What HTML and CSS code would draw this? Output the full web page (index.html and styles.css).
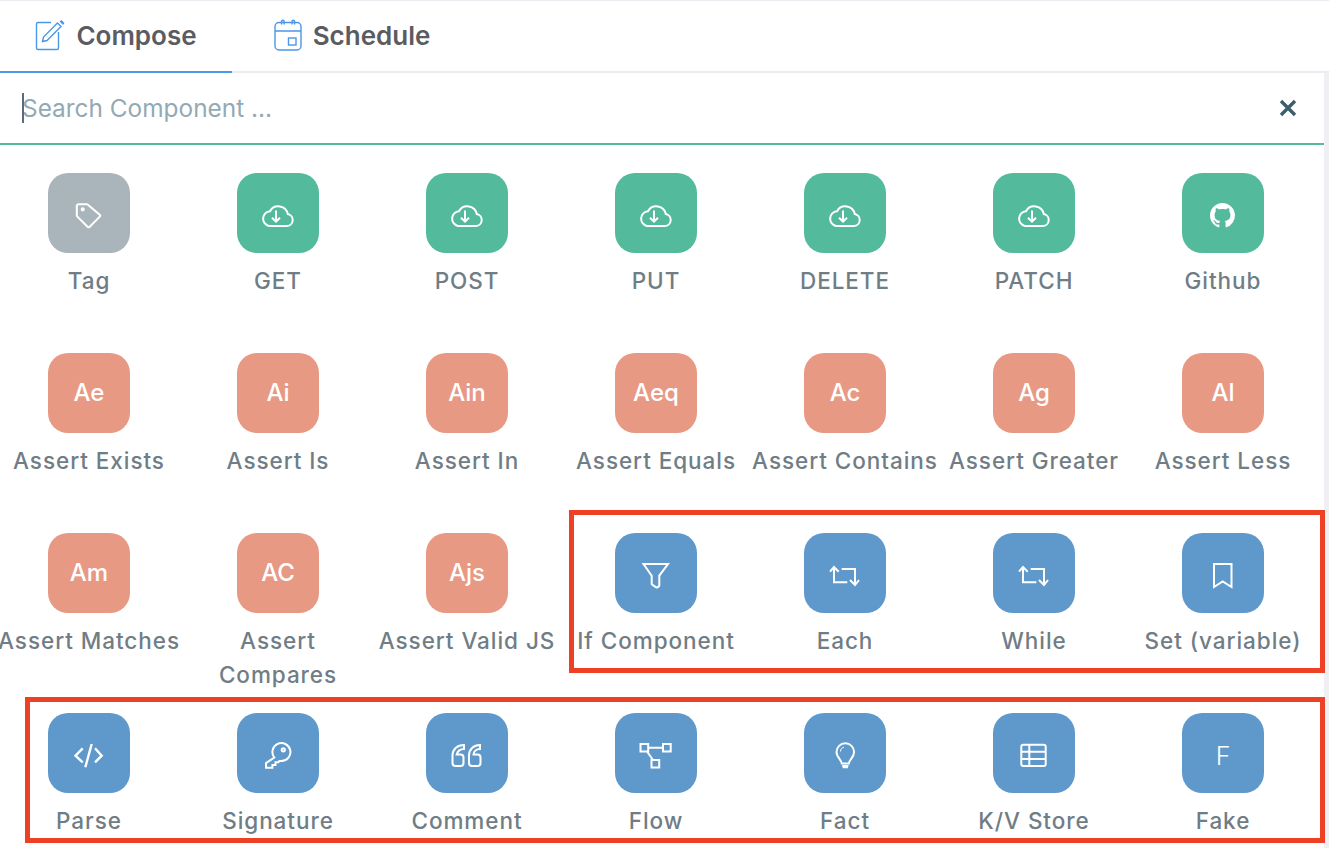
FILE: index.html
```html
<!DOCTYPE html>
<html lang="en">
<head>
  <meta charset="UTF-8">
  <meta name="viewport" content="width=device-width, initial-scale=1.0">
  <title>Compose</title>
  <link rel="stylesheet" href="styles.css">
</head>
<body>
  <svg class="sprite" xmlns="http://www.w3.org/2000/svg">
    <symbol id="i-tag" viewBox="0 0 40 40"><path d="M9.5 11.3h8.300a2 2 0 0 1 1.400.6L31 22a1 1 0 0 1 0 1.400L20.500 34a1.200 1.200 0 0 1-1.700 0L8.400 23.600a2 2 0 0 1-.6-1.400v-9.200a1.700 1.700 0 0 1 1.700-1.700z"/><circle cx="13.700" cy="16.300" r="1.100"/></symbol>
    <symbol id="i-cloud" viewBox="0 0 40 40"><path d="M11 33h17.800a6 6 0 0 0 1-11.900A9.600 9.600 0 0 0 12 18.200 7.500 7.500 0 0 0 11 33z"/><path d="M18 17.500v11M14 24.700l4 4 4-4"/></symbol>
    <symbol id="i-github" viewBox="0 0 40 40"><path class="solid" transform="translate(7 10) scale(1.56)" d="M8 0C3.58 0 0 3.58 0 8c0 3.54 2.29 6.53 5.47 7.59.4.07.55-.17.55-.38 0-.19-.01-.82-.01-1.49-2.01.37-2.53-.49-2.69-.94-.09-.23-.48-.94-.82-1.13-.28-.15-.68-.52-.01-.53.63-.01 1.08.58 1.23.82.72 1.21 1.87.87 2.33.66.07-.52.28-.87.51-1.07-1.78-.2-3.64-.89-3.64-3.95 0-.87.31-1.59.82-2.15-.08-.2-.36-1.02.08-2.12 0 0 .67-.21 2.2.82.64-.18 1.32-.27 2-.27.68 0 1.36.09 2 .27 1.53-1.04 2.2-.82 2.2-.82.44 1.1.16 1.92.08 2.12.51.56.82 1.27.82 2.15 0 3.07-1.87 3.75-3.65 3.95.29.25.54.73.54 1.48 0 1.07-.01 1.93-.01 2.2 0 .21.15.46.55.38A8.013 8.013 0 0016 8c0-4.42-3.58-8-8-8z"/></symbol>
    <symbol id="i-funnel" viewBox="0 0 40 40"><path d="M7.500 11h24.500L23.300 22.700v9.800a1 1 0 0 1-.5.8l-1.500 1a1 1 0 0 1-1.100 0l-4-2.600a1 1 0 0 1-.5-.8v-8.200z"/></symbol>
    <symbol id="i-repeat" viewBox="0 0 40 40"><path d="M5 18.700l4-4.700 4.700 4.700M9 14.500v14.800h13.300M16.700 16H30v15.500M25 27l5 5 4-5"/></symbol>
    <symbol id="i-bookmark" viewBox="0 0 40 40"><path d="M11 11h17.500v23l-8.800-5.500L11 34z"/></symbol>
    <symbol id="i-code" viewBox="0 0 40 40"><path class="bold" d="M13.700 15.300L6.500 22.700l7.200 6.600M26 15.300l6.700 7.400-6.700 6.600M22.700 11l-6.400 23.300"/></symbol>
    <symbol id="i-key" viewBox="0 0 40 40"><path d="M16.300 24.600A9 9 0 1 1 23.500 28.100L21.300 28l-.8 1.200h-3v2.900h-3.100v2.600H8v-4.600z"/><circle cx="25.300" cy="16.800" r="1.600"/></symbol>
    <symbol id="i-quote" viewBox="0 0 40 40"><path d="M17 12C10 12 5.500 16.500 5.500 22.500V30a3 3 0 0 0 3 3h5a3 3 0 0 0 3-3v-5.500a3 3 0 0 0-3-3h-3.800C10.500 18.500 13 16 17 16z"/><path d="M33 12C26.500 12 22 16.500 22 22.500V30a3 3 0 0 0 3 3h5.500a3 3 0 0 0 3-3v-5.500a3 3 0 0 0-3-3h-4c.2-3 2.500-5.500 6.500-5.500z"/></symbol>
    <symbol id="i-flow" viewBox="0 0 40 40"><path d="M4.500 11h7.700v7.500H4.500zM27 11h7.700v7.500H27zM15.500 27h7.700v7.500h-7.700zM12.200 14.700H27M11 18.500l6 8.500"/></symbol>
    <symbol id="i-bulb" viewBox="0 0 40 40"><path d="M16.800 30.500c0-3.500-5.300-6-5.300-11.400a8.800 8.800 0 0 1 17.600 0c0 5.400-5.300 7.900-5.300 11.400z"/><path class="thin" d="M15.500 18.500c0-2.500 1.500-4 3.500-4.300"/><path class="solid" d="M17 32h6.600l-.8 3.300h-5z"/></symbol>
    <symbol id="i-table" viewBox="0 0 40 40"><rect x="7.300" y="11.800" width="24.400" height="21.300" rx="2"/><path d="M7.300 18.800h24.400M7.300 26h24.400M15.300 11.800v21.300"/></symbol>
  </svg>

  <div class="app">
    <div class="tabs">
      <div class="tab active">
        <svg class="tab-icon" width="30" height="32" viewBox="0 0 30 32"><path d="M16 3.500H3a1.500 1.500 0 0 0-1.500 1.500v24A1.500 1.500 0 0 0 3 30.500h19a1.500 1.500 0 0 0 1.500-1.500V13"/><path d="M7.500 22.500l1-4.500L22.500 4l3.500 3.500L12 21.500z"/><path class="solid" d="M24.500 2.500l2-1.500 3 3-1.500 2z"/></svg>
        <span>Compose</span>
      </div>
      <div class="tab">
        <svg class="tab-icon" width="28" height="32" viewBox="0 0 28 32"><rect x="1" y="3.500" width="26" height="27.500" rx="4"/><path d="M1 12h26M7.500 5.500V2.500a1.300 1.300 0 0 1 2.600 0v3M18 5.500V2.500a1.300 1.300 0 0 1 2.600 0v3"/><rect x="14.500" y="19" width="7.500" height="7"/></svg>
        <span>Schedule</span>
      </div>
    </div>

    <div class="panel">
      <div class="search">
        <span class="caret"></span>
        <input class="search-input" type="text" placeholder="Search Component ...">
        <svg class="search-clear" width="20" height="20" viewBox="0 0 20 20"><path d="M3 3l14 14M17 3L3 17"/></svg>
      </div>

      <div class="grid">
        <div class="item"><div class="tile grey"><svg><use href="#i-tag"/></svg></div><div class="label">Tag</div></div>
        <div class="item"><div class="tile green"><svg><use href="#i-cloud"/></svg></div><div class="label">GET</div></div>
        <div class="item"><div class="tile green"><svg><use href="#i-cloud"/></svg></div><div class="label">POST</div></div>
        <div class="item"><div class="tile green"><svg><use href="#i-cloud"/></svg></div><div class="label">PUT</div></div>
        <div class="item"><div class="tile green"><svg><use href="#i-cloud"/></svg></div><div class="label">DELETE</div></div>
        <div class="item"><div class="tile green"><svg><use href="#i-cloud"/></svg></div><div class="label">PATCH</div></div>
        <div class="item"><div class="tile green"><svg><use href="#i-github"/></svg></div><div class="label">Github</div></div>

        <div class="item"><div class="tile salmon">Ae</div><div class="label">Assert Exists</div></div>
        <div class="item"><div class="tile salmon">Ai</div><div class="label">Assert Is</div></div>
        <div class="item"><div class="tile salmon">Ain</div><div class="label">Assert In</div></div>
        <div class="item"><div class="tile salmon">Aeq</div><div class="label">Assert Equals</div></div>
        <div class="item"><div class="tile salmon">Ac</div><div class="label">Assert Contains</div></div>
        <div class="item"><div class="tile salmon">Ag</div><div class="label">Assert Greater</div></div>
        <div class="item"><div class="tile salmon">Al</div><div class="label">Assert Less</div></div>

        <div class="item"><div class="tile salmon">Am</div><div class="label">Assert Matches</div></div>
        <div class="item"><div class="tile salmon">AC</div><div class="label">Assert Compares</div></div>
        <div class="item"><div class="tile salmon">Ajs</div><div class="label">Assert Valid JS</div></div>
        <div class="item"><div class="tile blue"><svg><use href="#i-funnel"/></svg></div><div class="label">If Component</div></div>
        <div class="item"><div class="tile blue"><svg><use href="#i-repeat"/></svg></div><div class="label">Each</div></div>
        <div class="item"><div class="tile blue"><svg><use href="#i-repeat"/></svg></div><div class="label">While</div></div>
        <div class="item"><div class="tile blue"><svg><use href="#i-bookmark"/></svg></div><div class="label">Set (variable)</div></div>

        <div class="item"><div class="tile blue"><svg><use href="#i-code"/></svg></div><div class="label">Parse</div></div>
        <div class="item"><div class="tile blue"><svg><use href="#i-key"/></svg></div><div class="label">Signature</div></div>
        <div class="item"><div class="tile blue"><svg><use href="#i-quote"/></svg></div><div class="label">Comment</div></div>
        <div class="item"><div class="tile blue"><svg><use href="#i-flow"/></svg></div><div class="label">Flow</div></div>
        <div class="item"><div class="tile blue"><svg><use href="#i-bulb"/></svg></div><div class="label">Fact</div></div>
        <div class="item"><div class="tile blue"><svg><use href="#i-table"/></svg></div><div class="label">K/V Store</div></div>
        <div class="item"><div class="tile blue light">F</div><div class="label">Fake</div></div>
      </div>
    </div>

    <div class="mark mark-top"></div>
    <div class="mark mark-bottom"></div>
  </div>
</body>
</html>
```

FILE: styles.css
```css
* {
  box-sizing: border-box;
}
body {
  margin: 0;
  font-family: Inter, "Noto Sans", sans-serif;
  background: #fff;
}
.sprite {
  display: none;
}
.sprite .solid {
  fill: #fff;
  stroke: none;
}
.sprite .bold {
  stroke-width: 2.4;
}
.sprite .thin {
  stroke-width: 1;
}
.app {
  position: relative;
  height: 100vh;
  overflow: hidden;
  border-top: 1px solid #ecedf3;
}

/* tabs */
.tabs {
  display: flex;
  gap: 4px;
  height: 72px;
  border-bottom: 2px solid #ecedf3;
}
.tab {
  display: flex;
  align-items: center;
  justify-content: center;
  gap: 11px;
  width: 232px;
  height: 72px;
  padding-bottom: 2px;
  font-size: 26px;
  font-weight: 600;
  color: #5a5c61;
  border-bottom: 2px solid transparent;
}
.tab.active {
  border-bottom-color: #4a98e6;
}
.tab-icon {
  fill: none;
  stroke: #4a98e6;
  stroke-width: 1.4;
}
.tab-icon .solid {
  fill: #4a98e6;
  stroke: none;
}

/* search */
.panel {
  height: 775px;
  border-right: 5px solid #f0f0f4;
}
.search {
  position: relative;
  display: flex;
  align-items: center;
  height: 72px;
  padding: 0 26px 0 22px;
  border-bottom: 2px solid #53b99a;
}
.search-input {
  flex: 1;
  border: none;
  outline: none;
  padding: 0;
  font-family: inherit;
  font-size: 24.4px;
  background: transparent;
}
.search-input::placeholder {
  color: #93a9b4;
  opacity: 1;
}
.caret {
  position: absolute;
  left: 22px;
  top: 20px;
  width: 2px;
  height: 30px;
  background: #5b6b7a;
}
.search-clear {
  fill: none;
  stroke: #3c5d6c;
  stroke-width: 3.4;
}

/* component grid */
.grid {
  display: grid;
  grid-template-columns: repeat(7, 189px);
  grid-auto-rows: 180px;
  margin: 28px 0 0 -5.5px;
  width: 1323px;
}
.item {
  display: flex;
  flex-direction: column;
  align-items: center;
}
.tile {
  display: flex;
  align-items: center;
  justify-content: center;
  width: 81.5px;
  height: 80px;
  padding-bottom: 2px;
  border-radius: 20px;
  color: #fff;
  font-size: 24px;
  font-weight: 500;
}
.tile svg {
  width: 40px;
  height: 40px;
  margin-bottom: -2px;
  fill: none;
  stroke: #fff;
  stroke-width: 2;
}
.tile.light {
  font-weight: 300;
  font-size: 25px;
  padding: 6px 0 0;
}
.grey {
  background: #a9b5bb;
}
.green {
  background: #53bb9c;
}
.salmon {
  background: #e89984;
}
.blue {
  background: #5f99cb;
}
.label {
  margin-top: 11px;
  font-size: 22.5px;
  font-weight: 500;
  line-height: 34px;
  letter-spacing: 0.95px;
  color: #707d85;
  text-align: center;
}

/* red highlight boxes drawn over the grid */
.mark {
  position: absolute;
  border: 5px solid #ee4024;
}
.mark-top {
  left: 569px;
  top: 509px;
  width: 756px;
  height: 163px;
}
.mark-bottom {
  left: 25px;
  top: 696px;
  width: 1300px;
  height: 146px;
}
```
